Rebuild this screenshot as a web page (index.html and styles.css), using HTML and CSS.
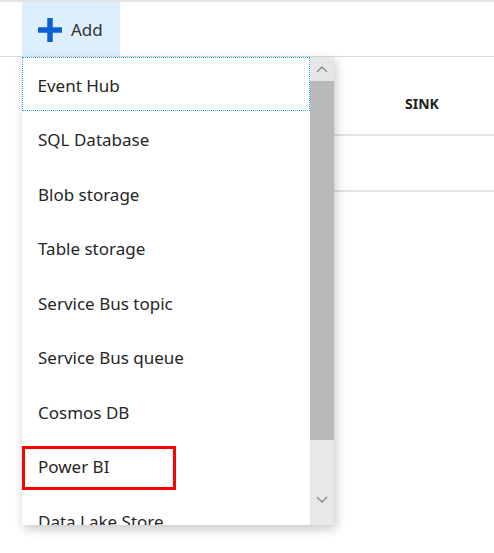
FILE: index.html
```html
<!DOCTYPE html>
<html>
<head>
<meta charset="utf-8">
<link rel="stylesheet" href="styles.css">
</head>
<body>
<div class="page">
  <div class="toolbar">
    <button class="add-btn">
      <svg class="plus" width="26" height="26" viewBox="0 0 26 26"><path d="M13 1v24M1 13h24" stroke="#0b5fd3" stroke-width="5.5" fill="none"/></svg>
      <span>Add</span>
    </button>
  </div>
  <div class="table">
    <div class="cell spacer"></div>
    <div class="cell head">SINK</div>
    <div class="cell spacer"></div>
    <div class="cell row"></div>
  </div>

  <div class="dropdown">
    <ul class="list">
      <li class="item focus">Event Hub</li>
      <li class="item">SQL Database</li>
      <li class="item">Blob storage</li>
      <li class="item">Table storage</li>
      <li class="item">Service Bus topic</li>
      <li class="item">Service Bus queue</li>
      <li class="item">Cosmos DB</li>
      <li class="item">Power BI</li>
      <li class="item">Data Lake Store</li>
    </ul>
    <div class="scrollbar">
      <div class="arrow up"><svg width="12" height="8" viewBox="0 0 12 8"><path d="M1 7l5-5 5 5" stroke="#888" stroke-width="1.3" fill="none"/></svg></div>
      <div class="thumb"></div>
      <div class="track"></div>
      <div class="arrow down"><svg width="12" height="8" viewBox="0 0 12 8"><path d="M1 1l5 5 5-5" stroke="#888" stroke-width="1.3" fill="none"/></svg></div>
    </div>
  </div>
  <div class="highlight"></div>
</div>
</body>
</html>
```

FILE: styles.css
```css
html, body {
  margin: 0;
  padding: 0;
  background: #fff;
}
.page {
  position: relative;
  width: 494px;
  height: 553px;
  overflow: hidden;
  font-family: "Noto Sans", "Open Sans", sans-serif;
  color: #262626;
  border-top: 2px solid #e3e3e3;
  box-sizing: border-box;
}
.toolbar {
  height: 54px;
  border-bottom: 1px solid #dcdcdc;
  display: flex;
  padding-left: 22px;
}
.add-btn {
  width: 98px;
  height: 54px;
  border: 0;
  margin: 0;
  padding: 0 0 0 15px;
  background: #ddeefc;
  display: flex;
  align-items: center;
  gap: 8px;
  font-family: inherit;
  font-size: 17px;
  color: #333;
}
.plus {
  display: block;
  margin-top: 2px;
}
.add-btn span {
  margin-top: 0;
}
.table {
  display: grid;
  grid-template-columns: 334px 1fr;
}
.cell.head {
  height: 79px;
  border-bottom: 2px solid #e3e3e3;
  display: flex;
  align-items: center;
  justify-content: center;
  padding-left: 16px;
  font-size: 14px;
  font-weight: 700;
  color: #1e1e1e;
  padding-top: 16px;
  box-sizing: border-box;
}
.cell.row {
  height: 56px;
  border-bottom: 2px solid #e3e3e3;
  box-sizing: border-box;
}
.dropdown {
  position: absolute;
  left: 22px;
  top: 55px;
  width: 312px;
  height: 468px;
  display: flex;
  background: #fff;
  box-shadow: 2px 4px 10px rgba(0,0,0,0.22);
}
.list {
  list-style: none;
  margin: 0;
  padding: 0;
  flex: 1;
  overflow: hidden;
}
.item {
  height: 54.5px;
  box-sizing: border-box;
  display: flex;
  align-items: center;
  padding-left: 16px;
  padding-top: 3px;
  font-size: 17px;
  line-height: 1;
}
.item.focus {
  border: 1.5px dotted #14b2ee;
  padding-left: 14.5px;
  height: 54px;
}
.scrollbar {
  width: 24px;
  display: flex;
  flex-direction: column;
  background: #e8e8e8;
}
.arrow {
  height: 24px;
  display: flex;
  align-items: center;
  justify-content: center;
}
.arrow.up {
  background: #e6e6e6;
}
.thumb {
  height: 359px;
  background: #b9b9b9;
}
.track {
  flex: 1;
}
.arrow.down {
  height: 30px;
  align-items: flex-start;
  padding-top: 1px;
  box-sizing: border-box;
}
.highlight {
  position: absolute;
  left: 22px;
  top: 444px;
  width: 154px;
  height: 44px;
  border: 3px solid #ff0000;
  box-sizing: border-box;
}
```
